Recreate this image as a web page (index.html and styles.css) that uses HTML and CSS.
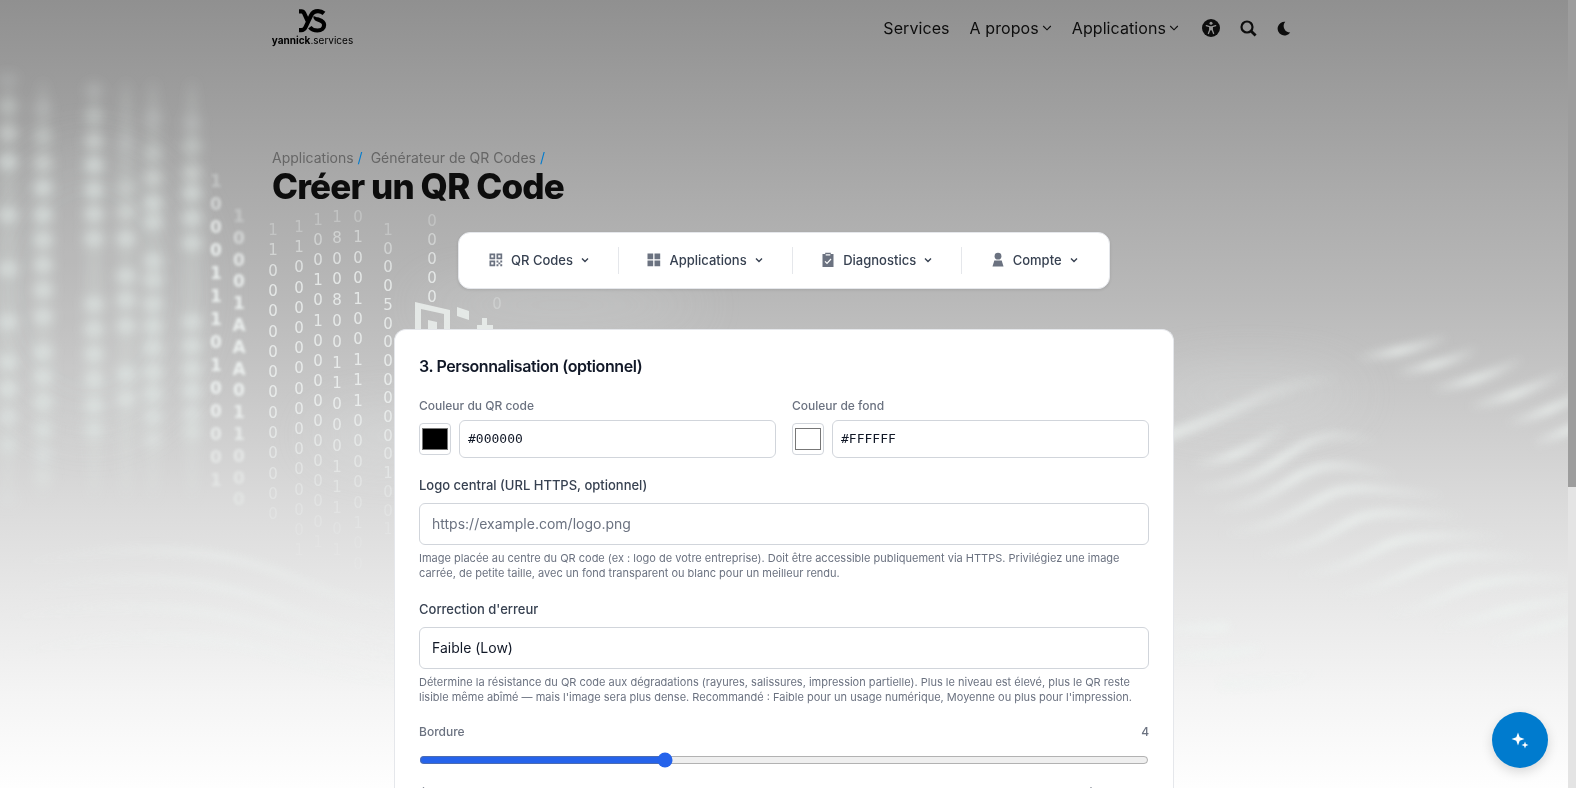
FILE: index.html
```
<!DOCTYPE html>
<html lang="fr">
<head>
  <meta charset="UTF-8">
  <meta name="viewport" content="width=device-width, initial-scale=1.0">
  <title>Créer un QR Code</title>
  <link rel="stylesheet" href="styles.css">
</head>
<body>
  <svg class="backdrop" viewBox="0 0 1568 788" aria-hidden="true">
    <defs>
      <filter id="soft" x="-50%" y="-50%" width="200%" height="200%"><feGaussianBlur stdDeviation="6"/></filter>
      <filter id="wave" x="-20%" y="-50%" width="140%" height="200%"><feGaussianBlur stdDeviation="4"/></filter>
      <filter id="glow" x="-50%" y="-50%" width="200%" height="200%"><feGaussianBlur stdDeviation="28"/></filter>
      <filter id="blurry"><feGaussianBlur stdDeviation="1.4"/></filter>
      <filter id="crisp"><feGaussianBlur stdDeviation="0.4"/></filter>
      <linearGradient id="fade">
        <stop offset="0" stop-color="#eef3f1" stop-opacity="0"/>
        <stop offset="0.45" stop-color="#eef3f1"/>
        <stop offset="0.6" stop-color="#eef3f1" stop-opacity="0.8"/>
        <stop offset="1" stop-color="#eef3f1" stop-opacity="0"/>
      </linearGradient>
      <linearGradient id="fade-right">
        <stop offset="0" stop-color="#eef3f1"/>
        <stop offset="1" stop-color="#eef3f1" stop-opacity="0"/>
      </linearGradient>
    </defs>
    <g filter="url(#glow)" fill="#e4e8e8" opacity="0.3">
      <ellipse cx="90" cy="290" rx="120" ry="150" opacity="0.4"/>
      <ellipse cx="400" cy="435" rx="90" ry="24"/>
      <ellipse cx="560" cy="305" rx="150" ry="18"/>
      <ellipse cx="1250" cy="395" rx="110" ry="24"/>
    </g>
    <g id="blobs" filter="url(#soft)" fill="#e6eeec"></g>
    <g id="near" class="digits near" filter="url(#blurry)"></g>
    <g id="far" class="digits far" filter="url(#crisp)"></g>
    <!-- QR pattern behind the card -->
    <g fill="#eef3f0" opacity="0.8">
      <path d="M415 302l35 8v24h-35zM421 309v25h23v-20z" fill-rule="evenodd"/>
      <path d="M428 320l9 2v8h-9zM457 307l12 4v9l-12-4zM477 325h5v-7h5v7h6v5h-16z"/>
    </g>
    <g class="waves" filter="url(#wave)">
      <path class="crest" d="M1150 442Q1215 420 1250 402T1345 376"/>
      <path d="M1190 465C1240 460 1262 440 1290 425"/>
      <path d="M1190 490C1250 485 1270 465 1300 447S1350 437 1380 441"/>
      <path d="M1210 511C1270 505 1285 478 1315 469S1370 473 1400 475"/>
      <path d="M1220 534C1290 528 1310 498 1340 491S1400 494 1450 496"/>
      <path d="M1255 555C1320 550 1335 525 1362 517S1420 515 1470 516"/>
      <path d="M1290 575C1350 572 1370 550 1395 542S1460 536 1510 536"/>
      <path d="M1330 595C1390 589 1400 573 1435 562S1490 557 1540 557"/>
      <path d="M1380 616C1435 608 1450 590 1480 584S1530 577 1590 580"/>
      <path d="M1430 630C1480 622 1500 605 1600 597"/>
      <path d="M1485 644C1530 635 1550 622 1620 612"/>
      <path d="M1355 358Q1410 352 1450 336"/>
      <path d="M1395 373Q1445 365 1480 348"/>
      <path d="M1430 390Q1485 380 1525 358"/>
      <path d="M1468 407Q1525 395 1568 370"/>
      <path d="M1505 424Q1550 413 1600 385"/>
      <path d="M1530 444Q1565 434 1610 410"/>
      <path d="M1130 625Q1174 630 1230 627M1170 656Q1220 657 1260 648M1220 684Q1280 684 1320 672"/>
      <path class="low" d="M10 566Q180 530 290 577T480 600"/>
      <path class="low" d="M10 594Q170 560 280 606T480 632"/>
      <path class="low" d="M-10 622Q150 590 270 627T480 665"/>
      <path class="low" d="M0 655Q180 620 280 655T480 680"/>
    </g>
  </svg>

  <header class="site-header">
    <a href="#" class="logo">
      <svg class="logo-mark" width="28" height="25" viewBox="0 0 28 25" fill="none" stroke="#000">
        <path d="M0 2.300h2.600c1.400 0 1.900.6 2.500 1.900l4.100 9M0 21.200h2.200c2.300 0 3.300-.8 4.400-3.200L12 6.500C13.800 2.900 16 2.200 19 2.200c2.300 0 4.300.7 6 2.200" stroke-width="4.200"/>
        <path d="M16.500 7.800c-1.300 3.600 8.600 2.300 8.600 8.100 0 3.400-2.600 5.600-6.700 5.600-3.500 0-6-1.300-7.600-3.300" stroke-width="4.200"/>
      </svg>
      <span class="logo-text"><b>yannick</b>.services</span>
    </a>
    <nav class="main-nav">
      <a href="#">Services</a>
      <a href="#">A propos<svg width="10" height="10" viewBox="0 0 10 10"><path d="M1.200 3l3.800 3.800L8.800 3" fill="none" stroke="currentColor" stroke-width="1.100"/></svg></a>
      <a href="#">Applications<svg width="10" height="10" viewBox="0 0 10 10"><path d="M1.200 3l3.800 3.800L8.800 3" fill="none" stroke="currentColor" stroke-width="1.100"/></svg></a>
      <div class="nav-icons">
        <svg width="18" height="18" viewBox="0 0 18 18"><circle cx="9" cy="9" r="9" fill="#0d0d0d"/><circle cx="9" cy="4.300" r="1.500" fill="#959595"/><path d="M4.300 6.600L7.800 7.700v3.100L6.400 14.500M13.700 6.600l-3.500 1.100v3.100l1.400 3.700" fill="none" stroke="#959595" stroke-width="1.300" stroke-linecap="round"/><path d="M7.400 7.300h3.200v4H7.400z" fill="#959595"/></svg>
        <svg width="17" height="17" viewBox="0 0 17 17" fill="none" stroke="#0d0d0d" stroke-width="2.200"><circle cx="7" cy="7" r="5.500"/><path d="M11 11l4.600 4.600" stroke-width="2.800"/></svg>
        <svg width="14" height="15" viewBox="0 0 14 15"><path d="M8.200.7A6.900 6.900 0 1 0 13.200 11.500 6.600 6.600 0 0 1 8.200.7z" fill="#0d0d0d"/></svg>
      </div>
    </nav>
  </header>

  <main>
    <div class="page-title">
      <div class="breadcrumb">
        <a href="#">Applications</a><span>/</span>
        <a href="#">Générateur de QR Codes</a><span>/</span>
      </div>
      <h1>Créer un QR Code</h1>
    </div>

    <nav class="app-nav">
      <a href="#">
        <svg width="14" height="14" viewBox="0 0 14 14" fill="#6b7280"><path fill-rule="evenodd" d="M.5.500h5.700v5.700H.5zM2.200 2.200v2.300h2.300V2.200zM7.500.500h5.700v5.700H7.500zM9.200 2.200v2.300h2.300V2.200zM.5 7.500h5.700v5.700H.5zM2.200 9.200v2.300h2.300V9.200z"/><path d="M7.500 7.500h1.900v1.900H7.500zM11.300 7.500h1.900v1.900h-1.900zM9.400 9.400h1.900v1.900H9.400zM7.500 11.300h1.900v1.900H7.500zM11.300 11.300h1.900v1.900h-1.900z"/></svg>
        QR Codes
        <svg class="chevron" width="8" height="8" viewBox="0 0 8 8"><path d="M1 2.500l3 3 3-3"/></svg>
      </a>
      <a href="#">
        <svg width="14" height="14" viewBox="0 0 14 14" fill="#6b7280"><path d="M.5.500h5.700v5.700H.5zM7.500.500h5.700v5.700H7.500zM.5 7.500h5.700v5.700H.5zM7.500 7.500h5.700v5.700H7.500z"/></svg>
        Applications
        <svg class="chevron" width="8" height="8" viewBox="0 0 8 8"><path d="M1 2.500l3 3 3-3"/></svg>
      </a>
      <a href="#">
        <svg width="14" height="16" viewBox="0 0 14 16"><path d="M1.500 2h2.700V.700h5.600V2h2.700v13H1.500z" fill="#6b7280"/><path d="M4.700 2.800h4.600M4 9.300l2 2 4-4.300" fill="none" stroke="#fff" stroke-width="1.200"/></svg>
        Diagnostics
        <svg class="chevron" width="8" height="8" viewBox="0 0 8 8"><path d="M1 2.500l3 3 3-3"/></svg>
      </a>
      <a href="#">
        <svg width="14" height="16" viewBox="0 0 14 16" fill="#6b7280"><circle cx="7" cy="4.200" r="3.400"/><path d="M3.300 8.500h7.400l1.800 6h-11z"/></svg>
        Compte
        <svg class="chevron" width="8" height="8" viewBox="0 0 8 8"><path d="M1 2.500l3 3 3-3"/></svg>
      </a>
    </nav>

    <form class="card">
      <h2>3. Personnalisation (optionnel)</h2>
      <div class="color-grid">
        <div>
          <label class="small-label" for="fg">Couleur du QR code</label>
          <div class="color-row">
            <input type="color" value="#000000">
            <input type="text" class="hex" id="fg" value="#000000">
          </div>
        </div>
        <div>
          <label class="small-label" for="bg">Couleur de fond</label>
          <div class="color-row">
            <input type="color" value="#ffffff">
            <input type="text" class="hex" id="bg" value="#FFFFFF">
          </div>
        </div>
      </div>

      <div class="form-group">
        <label for="logo">Logo central (URL HTTPS, optionnel)</label>
        <input type="text" class="field" id="logo" placeholder="https://example.com/logo.png">
        <p class="help">Image placée au centre du QR code (ex : logo de votre entreprise). Doit être accessible publiquement via HTTPS. Privilégiez une image carrée, de petite taille, avec un fond transparent ou blanc pour un meilleur rendu.</p>
      </div>

      <div class="form-group">
        <label for="level">Correction d'erreur</label>
        <select class="field" id="level">
          <option>Faible (Low)</option>
        </select>
        <p class="help">Détermine la résistance du QR code aux dégradations (rayures, salissures, impression partielle). Plus le niveau est élevé, plus le QR reste lisible même abîmé — mais l'image sera plus dense. Recommandé : Faible pour un usage numérique, Moyenne ou plus pour l'impression.</p>
      </div>

      <div class="range-group">
        <div class="range-label"><span>Bordure</span><span>4</span></div>
        <input type="range" min="1" max="10" value="4">
      </div>
      <div class="range-group">
        <div class="range-label"><span>Échelle</span><span>Élevée (10)</span></div>
      </div>
    </form>
  </main>

  <button class="assistant" aria-label="Assistant">
    <svg width="18" height="18" viewBox="0 0 18 18" fill="#fff"><path d="M7 1.500l1.700 4.800L13.500 8 8.700 9.700 7 14.500 5.300 9.700.5 8l4.800-1.700zM14 10.500l.9 2.600 2.600.9-2.600.9-.9 2.600-.9-2.600-2.600-.9 2.600-.9z"/></svg>
  </button>
  <div class="scrollbar"><div class="scrollbar-thumb"></div></div>

  <script src="script.js"></script>
</body>
</html>
```
FILE: styles.css
```
* {
  box-sizing: border-box;
}
html {
  overflow: hidden;
}
body {
  font-family: Inter, sans-serif;
  margin: 0;
  padding-right: 8px;
  height: 788px;
  display: flex;
  flex-direction: column;
  overflow: hidden;
  color: #0d0d0d;
  background: linear-gradient(#909090 0, #acacac 200px, #b9b9b9 300px, #c9c9c9 400px, #dadada 500px, #e8e8e8 600px, #f5f5f5 700px, #fefefe 788px);
}
main {
  flex: 1;
  min-height: 0;
  display: flex;
  flex-direction: column;
}
a {
  color: inherit;
  text-decoration: none;
}
.backdrop {
  position: fixed;
  top: 0;
  left: 0;
  width: 1568px;
  height: 788px;
  z-index: -1;
}
.digits {
  fill: #f4f8f7;
  text-anchor: middle;
}
.near {
  font: bold 17px "DejaVu Sans", sans-serif;
}
.far {
  font: 15px "DejaVu Sans", sans-serif;
}
.waves {
  fill: none;
  stroke: url(#fade);
  stroke-width: 9;
  opacity: 0.75;
}
.crest {
  stroke: url(#fade-right);
  stroke-width: 12;
}
.low {
  opacity: 0.6;
}
.site-header {
  width: 1024px;
  height: 56px;
  margin: 0 auto;
  display: flex;
  flex-shrink: 0;
  justify-content: space-between;
  align-items: center;
}
.logo {
  display: flex;
  flex-direction: column;
  align-items: center;
  width: 81px;
  color: #000;
}
.logo-text {
  font-size: 10px;
  line-height: 13px;
  white-space: nowrap;
}
.main-nav {
  display: flex;
  align-items: center;
  gap: 20px;
  font-size: 16px;
  letter-spacing: 0.08px;
}
.main-nav a {
  display: flex;
  align-items: center;
  gap: 3px;
}
.nav-icons {
  display: flex;
  align-items: center;
  gap: 20px;
  margin: 0 5px 0 3px;
}
.page-title {
  width: 1024px;
  margin: 92px auto 0;
}
.breadcrumb {
  display: flex;
  font-size: 14px;
  line-height: 20px;
  color: #666;
}
.breadcrumb span {
  color: #007bce;
  margin: 0 8px 0 4px;
}
h1 {
  margin: -2px 0 2px;
  font-size: 35px;
  line-height: 40px;
  font-weight: 800;
  letter-spacing: -0.85px;
}
.app-nav {
  display: flex;
  flex-shrink: 0;
  align-items: center;
  width: 652px;
  height: 57px;
  margin: 24px auto 0;
  background: #fff;
  border: 1px solid #e5e7eb;
  border-radius: 12px;
  box-shadow: 0 1px 3px rgba(0, 0, 0, 0.1);
}
.app-nav a {
  display: flex;
  flex-shrink: 0;
  align-items: center;
  gap: 8px;
  height: 27px;
  padding: 0 29px 2px;
  font-size: 13px;
  font-weight: 500;
  white-space: nowrap;
  color: #374151;
}
.app-nav a:first-child {
  padding-left: 30px;
}
.app-nav a + a {
  border-left: 1px solid #e5e7eb;
  padding-left: 28.5px;
}
.chevron {
  fill: none;
  stroke: #374151;
  stroke-width: 1.4;
}
.card {
  width: 780px;
  flex: 1;
  min-height: 0;
  overflow: hidden;
  margin: 40px auto 0;
  padding: 24px 24px 0;
  background: #fff;
  border: 1px solid #e5e7eb;
  border-bottom: none;
  border-radius: 12px 12px 0 0;
}
h2 {
  margin: 0 0 18px;
  font-size: 16px;
  line-height: 25px;
  font-weight: 600;
  letter-spacing: -0.42px;
  color: #111827;
}
.color-grid {
  display: grid;
  grid-template-columns: 1fr 1fr;
  gap: 16px;
  margin-bottom: 17px;
}
label {
  display: block;
  font-size: 13px;
  line-height: 20px;
  font-weight: 500;
  color: #374151;
  margin-bottom: 8px;
}
.small-label {
  font-size: 12px;
  line-height: 18px;
  color: #6b7280;
  margin-bottom: 5px;
}
.color-row {
  display: flex;
  align-items: center;
  gap: 8px;
}
input[type="color"] {
  width: 32px;
  height: 32px;
  padding: 0;
  background: #fff;
  border: 1px solid #d1d5db;
  border-radius: 4px;
}
.hex {
  flex: 1;
  height: 38px;
  padding: 0 8px 2px;
  font-family: "DejaVu Sans Mono", monospace;
  font-size: 13px;
  color: #111827;
  border: 1px solid #d1d5db;
  border-radius: 6px;
}
.form-group {
  margin-bottom: 18px;
}
.field {
  display: block;
  width: 100%;
  height: 42px;
  padding: 0 12px 2px;
  font-family: inherit;
  font-size: 14px;
  color: #111827;
  background: #fff;
  border: 1px solid #d1d5db;
  border-radius: 6px;
  appearance: none;
}
.field::placeholder {
  color: #6b7280;
}
.help {
  margin: 6px 0 0;
  font-size: 11px;
  line-height: 15px;
  color: #6b7280;
}
.range-label {
  display: flex;
  justify-content: space-between;
  font-size: 12px;
  line-height: 18px;
  font-weight: 500;
  color: #6b7280;
}
.range-group input {
  display: block;
  width: 100%;
  height: 16px;
  margin: 11px 0 18px;
  accent-color: #2563eb;
}
.assistant {
  position: fixed;
  right: 28px;
  bottom: 20px;
  width: 56px;
  height: 56px;
  display: flex;
  align-items: center;
  justify-content: center;
  padding: 0;
  border: none;
  border-radius: 50%;
  background: #007bce;
  box-shadow: 0 4px 12px rgba(0, 0, 0, 0.15);
}
.scrollbar {
  position: fixed;
  top: 0;
  right: 0;
  width: 8px;
  height: 100%;
  background: #e4e4e4;
}
.scrollbar-thumb {
  height: 487px;
  background: #9d9d9d;
}
```
FILE: script.js
```
const SVG_NS = 'http://www.w3.org/2000/svg';

// Out of focus columns: x, then the y of every light spot
const blobs = [
  [8, 79, 106, 133, 162, 215, 269, 322, 362, 389, 417, 445, 500],
  [43, 108, 136, 163, 188, 215, 240, 265, 290, 317, 352, 377, 402, 430, 455, 477],
  [94, 90, 116, 141, 165, 190, 214, 239, 304, 329, 354, 379, 405, 430],
  [126, 143, 188, 212, 239, 276, 300, 326, 374, 399],
  [153, 118, 153, 178, 203, 222, 261, 280, 304, 326, 348, 372, 394, 417, 440],
  [192, 123, 146, 173, 193, 218, 243, 322, 346, 369, 391, 414, 432]
];

// Digit columns: x, first y, step between digits, characters
const near = [
  [216, 181, 23, '10001110100001'],
  [239, 216, 21.8, '10001AAA011000']
];
const far = [
  [273, 229, 20.3, '110000000000000'],
  [299, 226, 20.2, '11000000000000001'],
  [318, 219, 20.1, '10010100000000001'],
  [337, 216, 20.8, '18008001100011101'],
  [358, 216, 20.4, '010010011100000100'],
  [388, 229, 18.7, '10005000000001001'],
  [432, 220, 19, '00000'],
  [497, 303, 17, '0']
];

function drawDigits(id, columns, peak) {
  const group = document.getElementById(id);
  columns.forEach(([x, y, step, chars]) => {
    [...chars].forEach((char, i) => {
      const text = document.createElementNS(SVG_NS, 'text');
      const cy = y + i * step;
      text.setAttribute('x', x);
      text.setAttribute('y', cy + 6);
      // Digits fade out at both ends of the column
      const fade = Math.min(1, (i + 1.5) / 4, (570 - cy) / 170);
      text.setAttribute('opacity', Math.max(0.15, fade * peak));
      text.textContent = char;
      group.appendChild(text);
    });
  });
}

blobs.forEach(([x, ...ys]) => {
  const group = document.getElementById('blobs');
  // Faint trail that joins the spots of a column
  const trail = document.createElementNS(SVG_NS, 'ellipse');
  trail.setAttribute('cx', x);
  trail.setAttribute('cy', 290);
  trail.setAttribute('rx', 9);
  trail.setAttribute('ry', 210);
  trail.setAttribute('opacity', 0.2);
  group.appendChild(trail);
  ys.forEach((y, i) => {
    const spot = document.createElementNS(SVG_NS, 'ellipse');
    spot.setAttribute('cx', x);
    spot.setAttribute('cy', y);
    spot.setAttribute('rx', 11);
    spot.setAttribute('ry', 7);
    spot.setAttribute('opacity', Math.min(0.6, 0.15 + i * 0.15, (540 - y) / 250));
    group.appendChild(spot);
  });
});

drawDigits('near', near, 0.85);
drawDigits('far', far, 0.75);
```
